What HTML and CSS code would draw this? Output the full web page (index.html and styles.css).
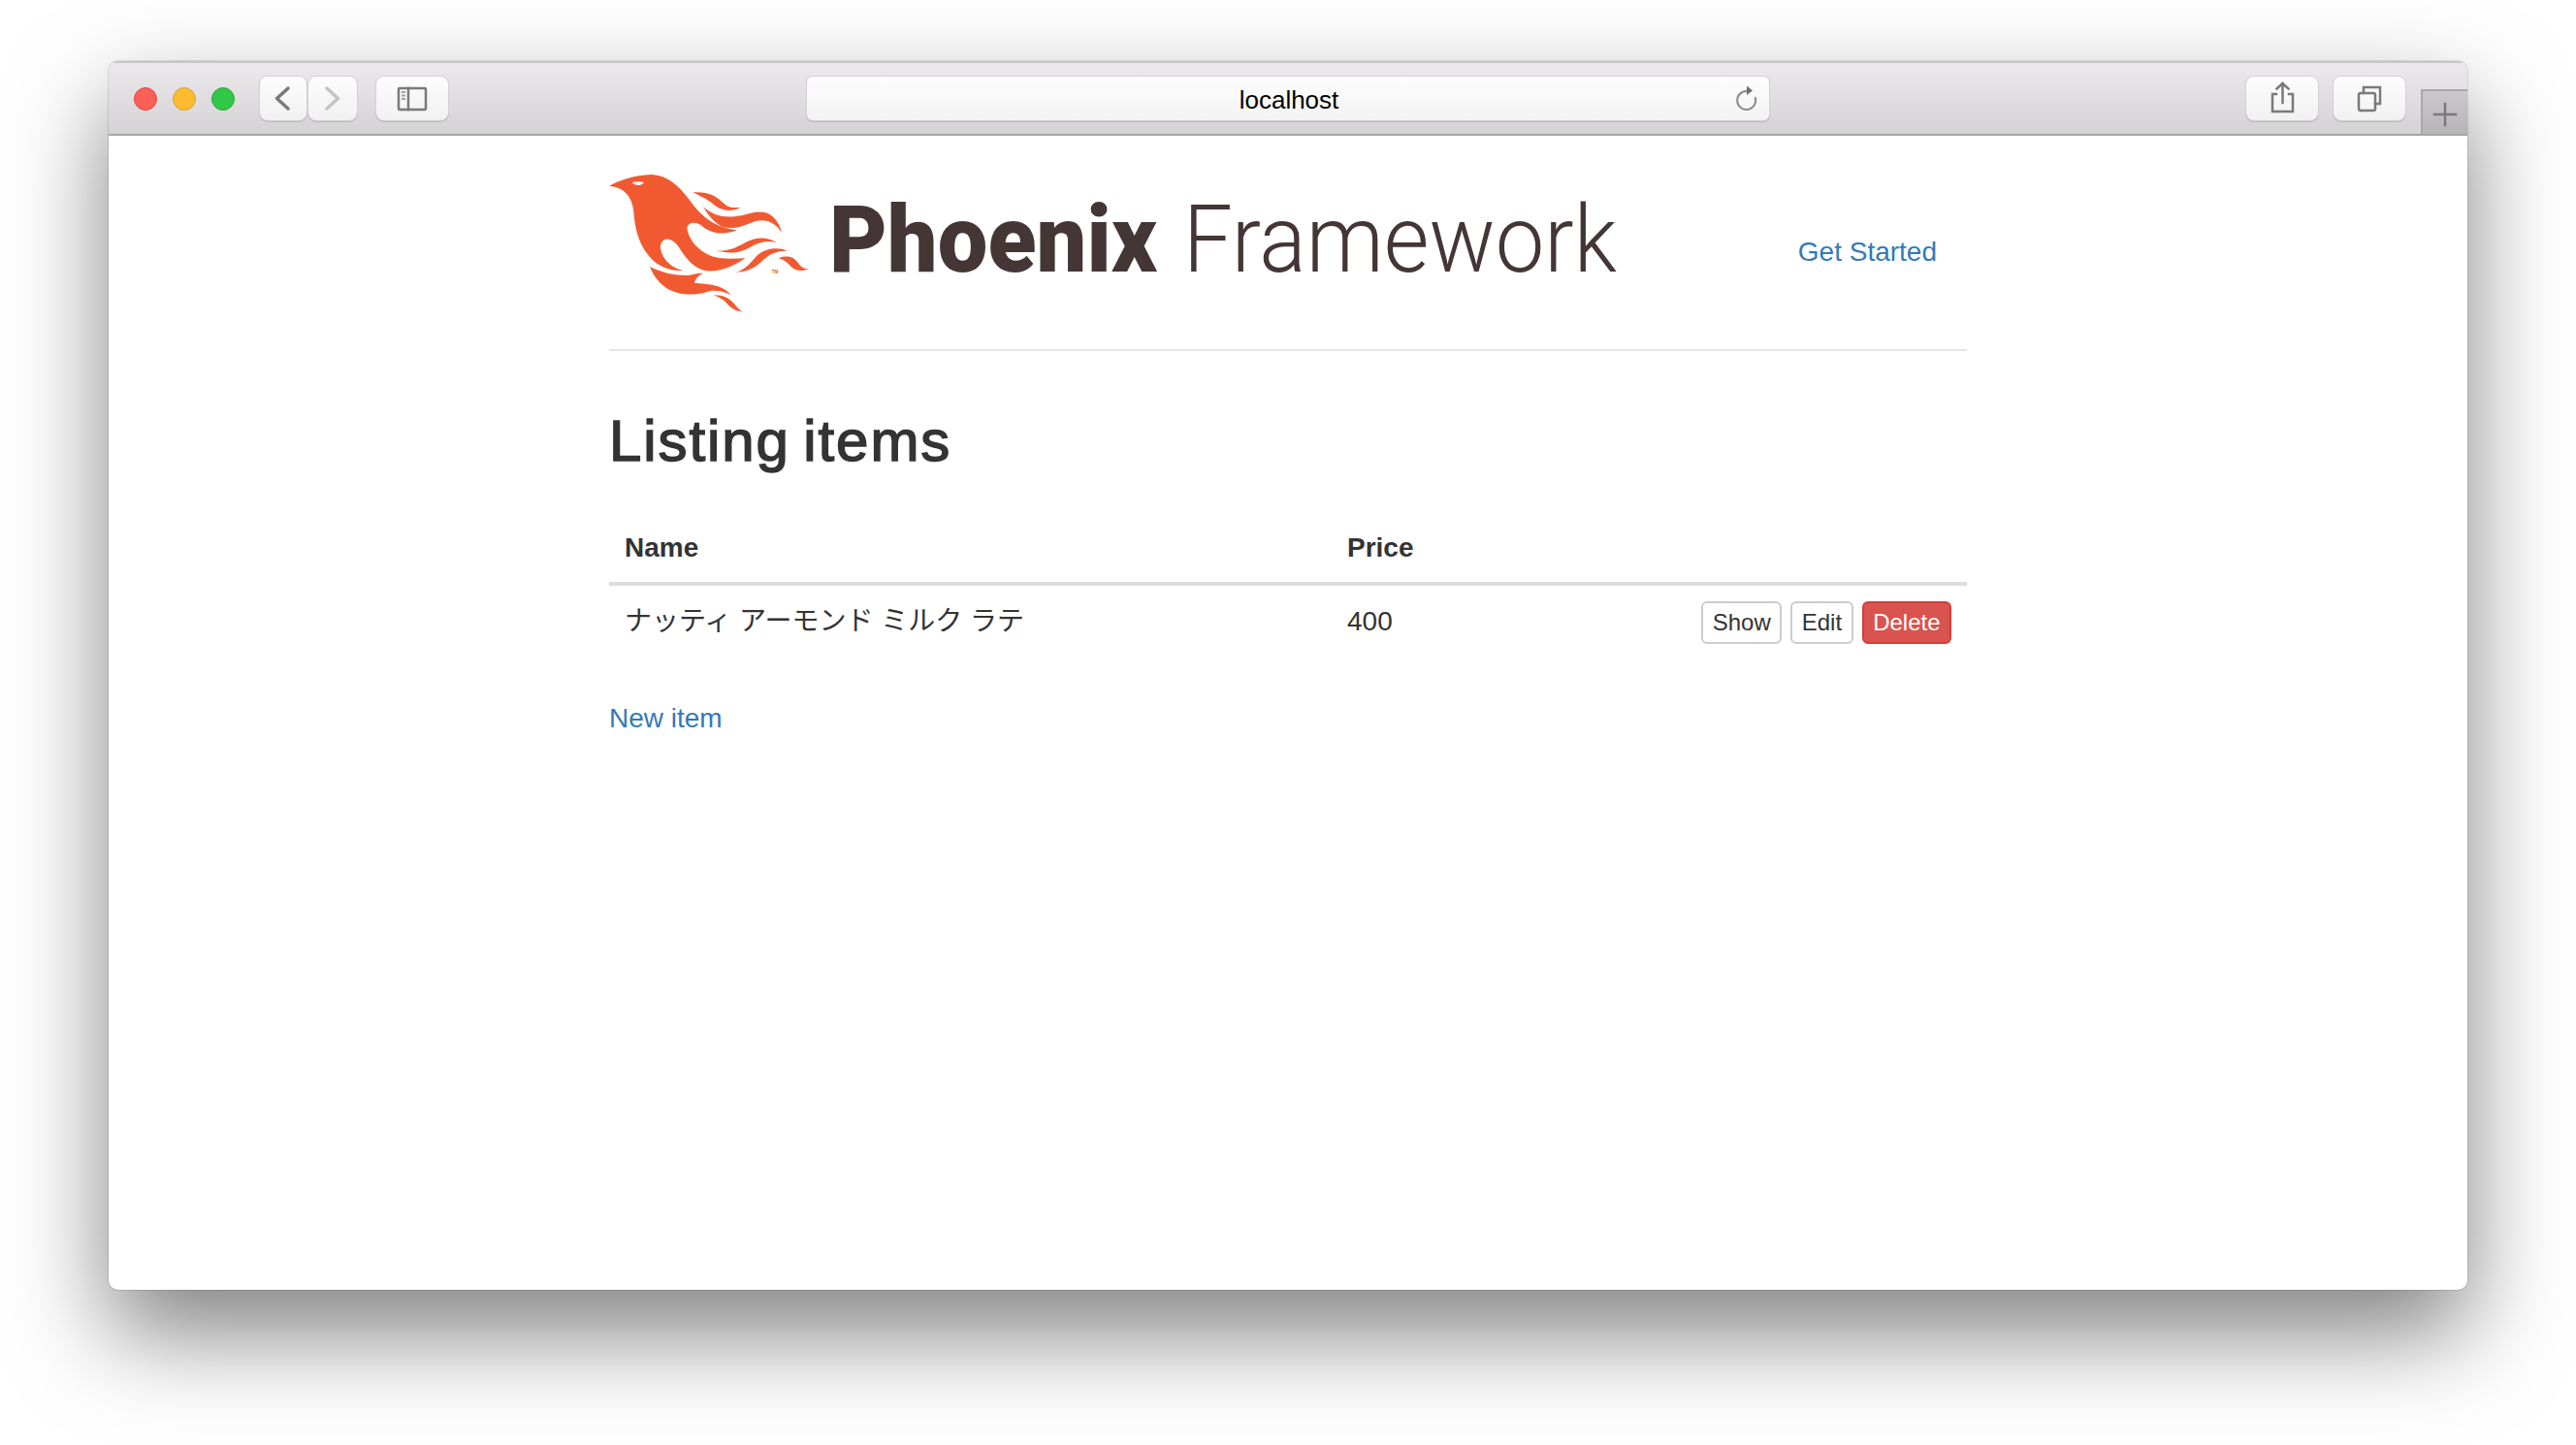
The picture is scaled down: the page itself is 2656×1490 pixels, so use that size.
FILE: index.html
```html
<!DOCTYPE html>
<html lang="en">
<head>
<meta charset="utf-8">
<title>Listing items</title>
<link rel="stylesheet" href="styles.css">
</head>
<body>
<div class="window">
  <div class="toolbar">
    <div class="lights">
      <span class="light red"></span>
      <span class="light amber"></span>
      <span class="light green"></span>
    </div>
    <div class="tb-btn back">
      <svg width="48" height="45" viewBox="0 0 48 45"><path d="M29 12 L17.500 22.500 L29 33" class="ic ic-3"/></svg>
    </div>
    <div class="tb-btn forward">
      <svg width="50" height="45" viewBox="0 0 50 45"><path d="M19 12 L30.500 22.500 L19 33" class="ic ic-3 ic-faint"/></svg>
    </div>
    <div class="tb-btn sidebar">
      <svg width="74" height="45" viewBox="0 0 74 45">
        <rect x="23" y="12" width="28" height="22" rx="1" class="ic ic-2"/>
        <path d="M33 12 V34" class="ic ic-2"/>
        <path d="M26 16 H30 M26 19.500 H30 M26 23 H30" class="ic ic-tick"/>
      </svg>
    </div>
    <div class="url">
      <span class="url-text">localhost</span>
      <svg class="reload" width="24" height="30" viewBox="0 0 24 30">
        <path d="M12 7 A9.500 9.500 0 1 0 20.500 13" class="ic ic-thin"/>
        <path d="M12 1.500 L18 6.500 L12 11 Z" class="ic-fill"/>
      </svg>
    </div>
    <div class="tb-btn share">
      <svg width="74" height="45" viewBox="0 0 74 45">
        <path d="M31 18 H27 V36 H48 V18 H44" class="ic ic-2"/>
        <path d="M37.500 7 V27 M31.500 12.500 L37.500 7 L43.500 12.500" class="ic ic-2"/>
      </svg>
    </div>
    <div class="tb-btn tabs">
      <svg width="74" height="45" viewBox="0 0 74 45">
        <rect x="26" y="17" width="17" height="18" rx="2" class="ic ic-2"/>
        <path d="M31 17 V11 H48 V28 H43" class="ic ic-2"/>
      </svg>
    </div>
    <div class="new-tab">
      <svg width="46" height="44" viewBox="0 0 46 44"><path d="M23 13 V35 M12 24 H34" class="ic ic-2"/></svg>
    </div>
  </div>
  <div class="page">
    <header class="site-header">
      <svg class="logo" width="1060" height="180" viewBox="0 0 1060 180" role="img" aria-label="Phoenix Framework">
        <g transform="translate(-18 4) scale(0.33333)">
          <path class="flame" d="M55 95 C85 78 130 62 185 60 C235 62 270 95 300 135 C330 175 365 222 450 232 C420 245 380 248 345 222 C325 205 300 205 295 225 C300 265 340 310 395 318 C425 322 450 320 475 318 C440 345 395 362 355 358 C320 352 295 325 270 285 C250 255 220 250 213 280 C212 315 245 350 283 356 C245 360 205 345 180 315 C150 280 135 240 130 175 C125 125 100 100 55 95 Z"/>
          <path class="eye" d="M125 84 C137 81 150 81 162 84 C155 94 138 98 125 84 Z"/>
          <path class="flame" d="M313 115 C360 112 385 125 410 150 C425 165 445 162 460 162 C435 176 405 172 385 158 C365 140 340 128 313 115 Z"/>
          <path class="flame" d="M345 160 C385 195 425 195 470 185 C505 175 535 168 560 190 C575 205 585 222 588 240 C570 210 540 195 505 205 C465 222 435 230 405 222 C380 210 360 185 345 160 Z"/>
          <path class="flame" d="M385 295 C420 300 450 285 480 268 C510 252 545 252 572 270 C540 262 515 270 490 285 C455 305 420 305 385 295 Z"/>
          <path class="flame" d="M445 362 C475 355 490 335 510 312 C535 288 575 282 606 296 C575 295 550 305 530 325 C505 350 480 362 445 362 Z"/>
          <path class="flame" d="M578 318 C610 308 625 315 640 335 C650 348 660 352 672 352 C650 362 625 358 612 340 C602 328 590 322 578 318 Z"/>
          <path class="flame" d="M180 345 C215 362 250 372 300 372 C315 370 330 364 345 366 C330 372 322 382 318 395 C345 398 380 398 405 412 C415 418 425 425 432 432 C400 418 375 415 350 425 C310 435 265 432 230 410 C205 392 190 370 180 345 Z"/>
          <path class="flame" d="M378 433 C405 432 425 442 440 458 C450 470 458 480 468 485 C445 482 430 472 418 458 C408 447 395 440 378 433 Z"/>
          <text class="tm" x="557" y="365">TM</text>
        </g>
        <text class="logo-bold" x="227" y="124" textLength="338" lengthAdjust="spacingAndGlyphs">Phoenix</text>
        <text class="logo-thin" x="592" y="124" textLength="447" lengthAdjust="spacingAndGlyphs">Framework</text>
      </svg>
      <nav class="site-nav"><a href="#">Get Started</a></nav>
    </header>
    <main>
      <h2 class="title">Listing items</h2>
      <table class="items">
        <thead>
          <tr><th class="col-name">Name</th><th class="col-price">Price</th><th></th></tr>
        </thead>
        <tbody>
          <tr>
            <td class="cjk">ナッティ アーモンド ミルク ラテ</td>
            <td>400</td>
            <td class="actions">
              <a class="btn" href="#">Show</a>
              <a class="btn" href="#">Edit</a>
              <a class="btn btn-danger" href="#">Delete</a>
            </td>
          </tr>
        </tbody>
      </table>
      <a class="new-item" href="#">New item</a>
    </main>
  </div>
</div>
</body>
</html>
```
FILE: styles.css
```css
* { box-sizing: border-box; }
html, body { margin: 0; height: 100%; background: #fff; }
body {
  padding: 63px 112px 0;
  overflow: hidden;
  font-family: "Liberation Sans", Arial, sans-serif;
  font-size: 28px;
  line-height: 40px;
  color: #333;
}
a { color: #337ab7; text-decoration: none; }

.window {
  width: 2432px;
  height: 1267px;
  border-radius: 10px;
  background: #fff;
  box-shadow: 0 44px 100px rgba(0, 0, 0, .5), 0 0 0 1px rgba(0, 0, 0, .1);
  overflow: hidden;
}

.toolbar {
  display: flex;
  align-items: flex-start;
  height: 77px;
  padding: 14px 0 0 26px;
  background: linear-gradient(#ebe9eb, #d4d2d5);
  border-top: 2px solid #c6c5c6;
  border-bottom: 2px solid #a6a5a6;
}
.lights { display: flex; gap: 16px; margin-top: 11px; }
.light { width: 24px; height: 24px; border-radius: 50%; border: 1px solid; }
.red { background: #fc5f57; border-color: #df4744; }
.amber { background: #fdbb2e; border-color: #de9f34; }
.green { background: #33c748; border-color: #27aa35; }

.tb-btn {
  flex: none;
  height: 45px;
  background: linear-gradient(#fdfdfd, #f1f1f1);
  border-radius: 8px;
  box-shadow: 0 0 0 1px #d2d0d2, 0 1px 0 1px #b9b7b9;
}
.tb-btn svg { display: block; }
.back { width: 48px; margin-left: 26px; }
.forward { width: 50px; margin-left: 2px; }
.sidebar { width: 74px; margin-left: 20px; }
.share { width: 74px; margin-left: 492px; }
.tabs { width: 74px; margin-left: 16px; }

.ic { fill: none; stroke: #7a7a7a; stroke-linecap: square; }
.ic-2 { stroke-width: 2.500px; }
.ic-3 { stroke-width: 3.500px; stroke-linecap: round; stroke-linejoin: round; }
.ic-faint { stroke: #c4c4c4; }
.ic-tick { stroke: #a0a0a0; stroke-width: 2px; stroke-linecap: butt; }
.ic-thin { stroke: #8b8b8b; stroke-width: 2px; stroke-linecap: butt; }
.ic-fill { fill: #6f6f6f; }

.url {
  flex: none;
  display: flex;
  align-items: center;
  justify-content: center;
  position: relative;
  width: 992px;
  height: 45px;
  margin-left: 370px;
  background: linear-gradient(#fdfdfd, #f3f3f3);
  border-radius: 6px;
  box-shadow: 0 0 0 1px #d2d0d2, 0 1px 0 1px #b9b7b9;
}
.url-text { font-size: 26px; line-height: 45px; color: #000; padding: 3px 0 0 2px; }
.reload { position: absolute; right: 11px; top: 8px; }

.new-tab {
  flex: none;
  width: 48px;
  height: 46px;
  margin: 13px 0 0 16px;
  background: linear-gradient(#cbc9cb, #b6b4b6);
  border-top: 2px solid #a9a8a9;
  border-left: 2px solid #a9a8a9;
}
.new-tab svg { display: block; }

.page { width: 1400px; margin: 0 auto; }

.site-header {
  display: flex;
  justify-content: space-between;
  align-items: flex-start;
  height: 222px;
  padding-top: 16px;
  border-bottom: 2px solid #e5e5e5;
}
.logo { display: block; flex: none; overflow: visible; }
.flame { fill: #f15a30; }
.eye { fill: #fff; }
.tm { font: 700 14px "Liberation Sans", Arial, sans-serif; fill: #f15a30; }
.logo-bold { font: 900 96px Roboto, sans-serif; fill: #453636; }
.logo-thin { font: 300 96px Roboto, sans-serif; fill: #453636; }
.site-nav { padding: 84px 31px 0 0; }

.title {
  margin: 60px 0 0;
  font-size: 60px;
  line-height: 66px;
  font-weight: 400;
  letter-spacing: 1.900px;
  word-spacing: -5px;
  -webkit-text-stroke: 1.500px #333;
}

.items {
  width: 100%;
  margin-top: 40px;
  border-collapse: collapse;
  table-layout: fixed;
}
.items th {
  padding: 17px 16px 15px;
  text-align: left;
  font-weight: 700;
  border-bottom: 4px solid #ddd;
}
.col-name { width: 745px; }
.col-price { width: 300px; }
.items td { padding: 17px 16px 15px; vertical-align: top; }
.items td.actions { padding-top: 16px; }
.cjk { font-family: "Liberation Sans", "Noto Sans CJK JP", sans-serif; }
.actions { text-align: right; font-size: 0; line-height: 0; }

.btn {
  display: inline-block;
  margin-left: 9px;
  padding: 2px 9.500px;
  font-size: 24px;
  line-height: 36px;
  color: #333;
  background: #fff;
  border: 2px solid #ccc;
  border-radius: 6px;
}
.btn-danger { color: #fff; background: #d9534f; border-color: #d43f3a; }

.new-item { display: block; margin-top: 42px; }
```
